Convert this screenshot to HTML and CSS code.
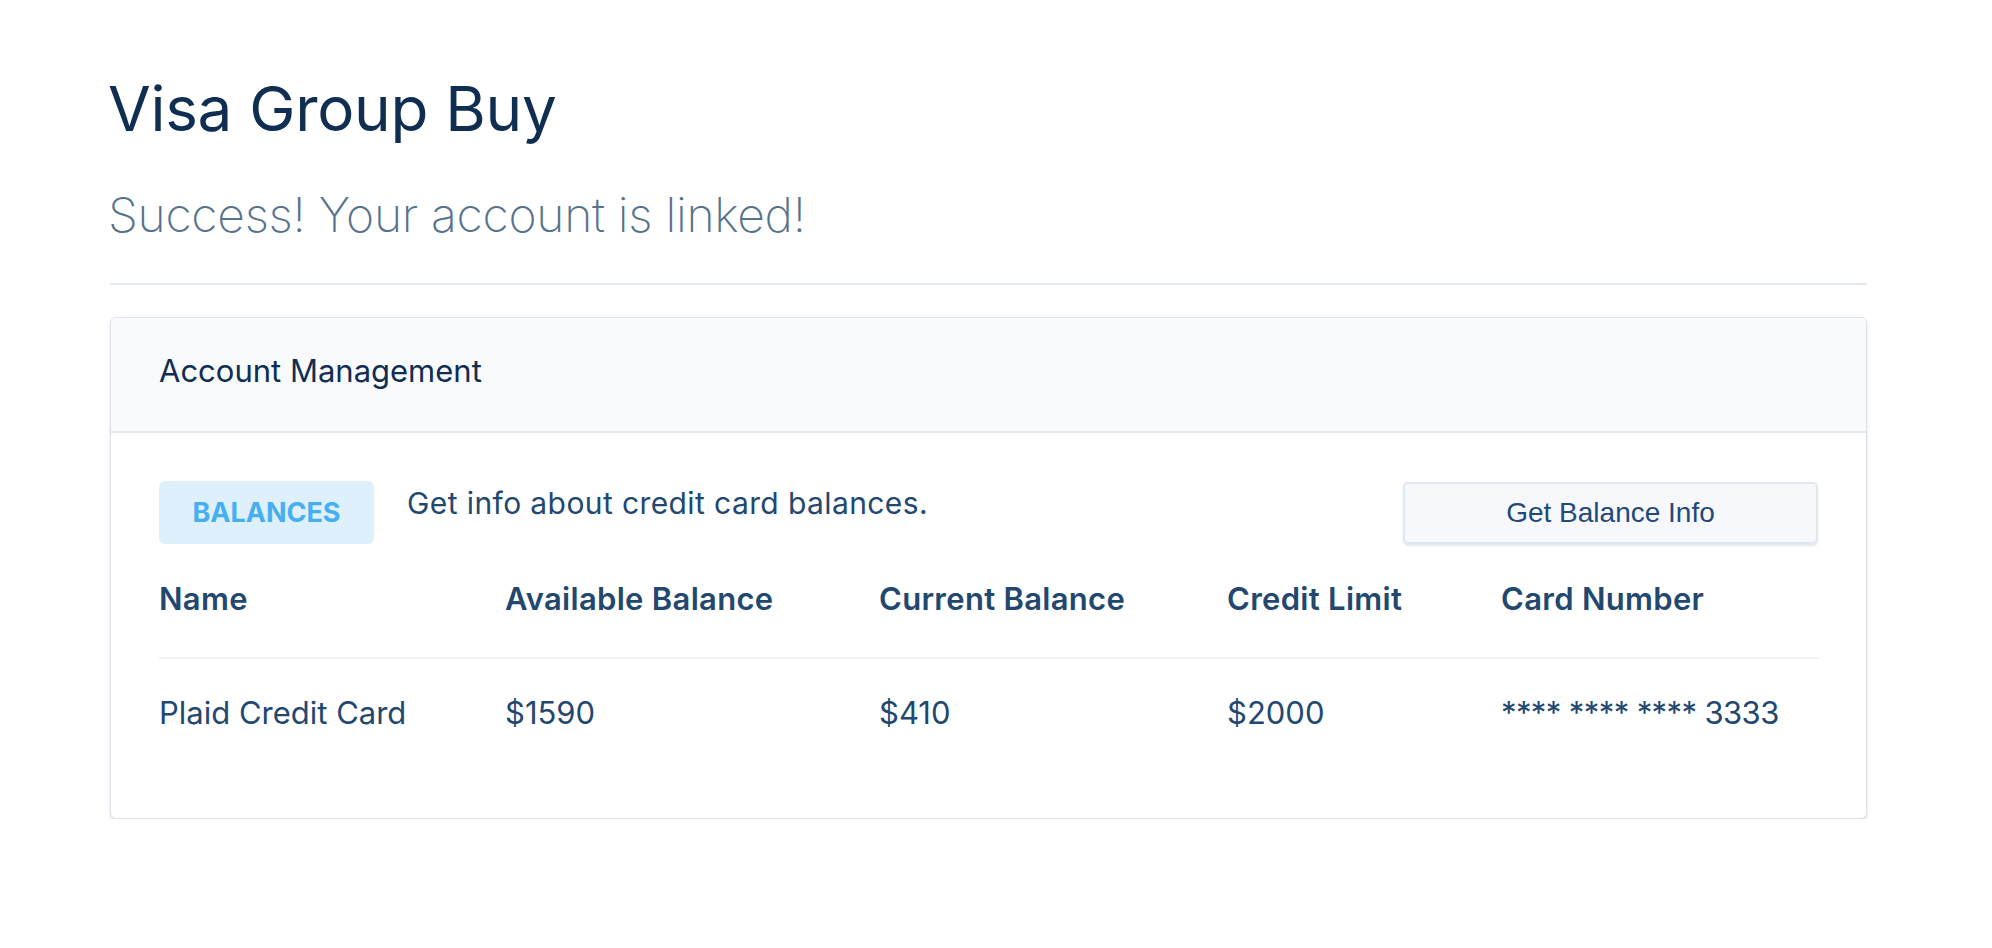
FILE: index.html
```html
<!DOCTYPE html>
<html lang="en">
<head>
<meta charset="utf-8">
<title>Visa Group Buy</title>
<link rel="stylesheet" href="styles.css">
</head>
<body>
<main class="page">
  <h1 class="title">Visa Group Buy</h1>
  <p class="subtitle">Success! Your account is linked!</p>
  <hr class="divider">
  <section class="card">
    <header class="card-header">Account Management</header>
    <div class="card-body">
      <div class="action-row">
        <span class="badge">BALANCES</span>
        <p class="desc">Get info about credit card balances.</p>
        <button class="btn" type="button">Get Balance Info</button>
      </div>
      <table class="data">
        <colgroup>
          <col class="c1"><col class="c2"><col class="c3"><col class="c4"><col class="c5">
        </colgroup>
        <thead>
          <tr><th>Name</th><th>Available Balance</th><th>Current Balance</th><th>Credit Limit</th><th>Card Number</th></tr>
        </thead>
        <tbody>
          <tr><td>Plaid Credit Card</td><td>$1590</td><td>$410</td><td>$2000</td><td class="mask">**** **** **** 3333</td></tr>
        </tbody>
      </table>
    </div>
  </section>
</main>
</body>
</html>
```

FILE: styles.css
```css
* { box-sizing: border-box; }
html, body { margin: 0; padding: 0; background: #ffffff; }
body { font-family: Inter, "Noto Sans", sans-serif; color: #234870; }

.page {
  width: 1757px;
  margin-left: 110px;
  padding-top: 78px;
}

.title {
  margin: 0 0 0 -2px;
  font-size: 62px;
  line-height: 62px;
  font-weight: 400;
  letter-spacing: -0.3px;
  color: #0f2e51;
}

.subtitle {
  margin: 51px 0 0 -2px;
  font-size: 48px;
  line-height: 48px;
  font-weight: 200;
  letter-spacing: -0.3px;
  color: #56728d;
}

.divider {
  margin: 44px 0 0;
  border: 0;
  height: 2px;
  background: #e3e8ee;
}

.card {
  margin-top: 32px;
  border: 1px solid #dde3ea;
  border-radius: 6px;
  box-shadow: 0 2px 3px rgba(50, 80, 120, 0.18);
  background: #fff;
  overflow: hidden;
}

.card-header {
  padding: 37px 48px 44px;
  font-size: 31px;
  line-height: 32px;
  color: #0f2e51;
  background: #f9fafc;
  border-bottom: 2px solid #e3e8ee;
}

.card-body {
  padding: 48px 48px 47px;
}

.action-row {
  display: flex;
  align-items: flex-start;
}

.badge {
  display: flex;
  align-items: center;
  justify-content: center;
  width: 215px;
  height: 63px;
  border-radius: 6px;
  background: #ddf0fc;
  color: #47aef2;
  font-size: 27px;
  font-weight: 700;
}

.desc {
  margin: 0 0 0 33px;
  font-size: 30px;
  line-height: 45px;
  letter-spacing: 0.4px;
  color: #234870;
  flex: 1;
}

.btn {
  width: 415px;
  height: 62px;
  margin-top: 1px;
  border: 2px solid #e1e7ee;
  border-radius: 5px;
  background: #f6f8fb;
  box-shadow: 0 2px 2px rgba(60, 90, 130, 0.14);
  font-family: "Liberation Sans", Arial, sans-serif;
  font-size: 28px;
  color: #22497a;
  padding: 0;
}

.data {
  margin-top: 37px;
  width: 1660px;
  border-collapse: collapse;
  table-layout: fixed;
}
.c1 { width: 346px; }
.c2 { width: 374px; }
.c3 { width: 348px; }
.c4 { width: 274px; }
.c5 { width: 318px; }

.data th {
  text-align: left;
  font-size: 31px;
  line-height: 36px;
  font-weight: 600;
  letter-spacing: 0.3px;
  color: #234870;
  padding: 0 0 40px;
  border-bottom: 2px solid #f1f4f7;
}

.data td {
  font-size: 31px;
  line-height: 36px;
  font-weight: 400;
  color: #234870;
  padding: 36px 0 40px;
  white-space: nowrap;
}

.data td.mask {
  letter-spacing: -0.6px;
}
```
